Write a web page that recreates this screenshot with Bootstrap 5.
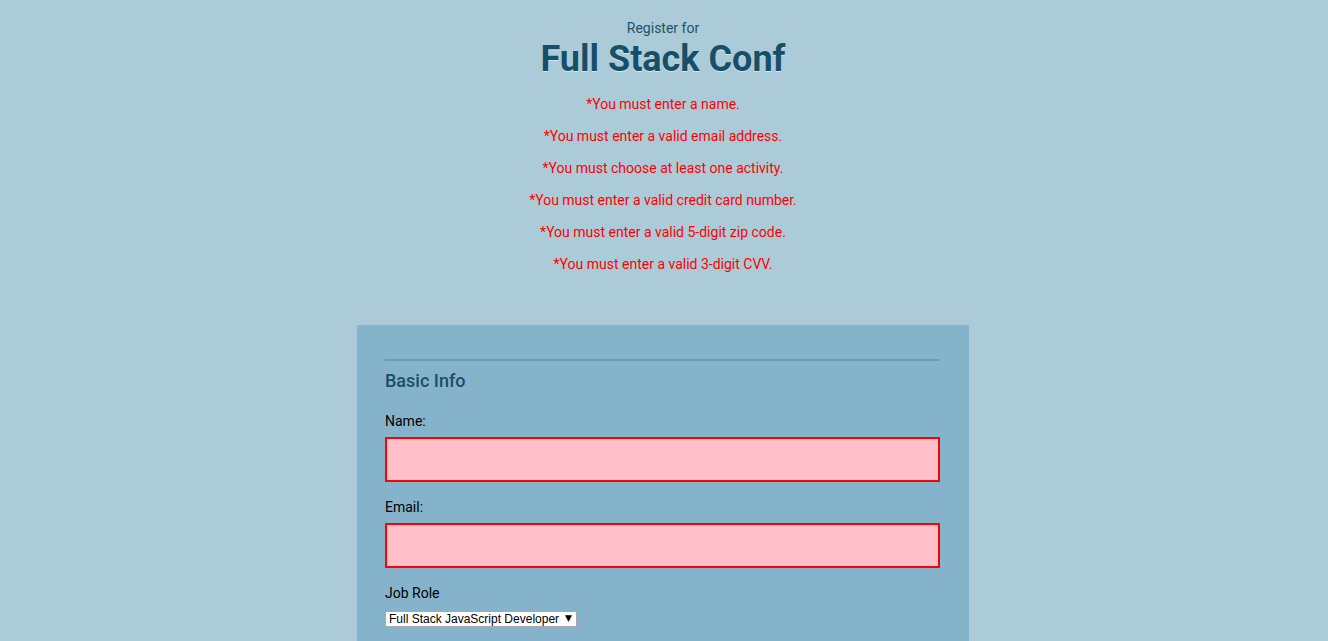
<!DOCTYPE html>
<html lang="en">
<head>
<meta charset="utf-8">
<meta name="viewport" content="width=device-width, initial-scale=1">
<title>Register for Full Stack Conf</title>
<link href="https://cdn.jsdelivr.net/npm/bootstrap@5.3.0/dist/css/bootstrap.min.css" rel="stylesheet">
<style>
  body { background: #accbd8; color: #000; font-family: Roboto, "Liberation Sans", sans-serif; font-size: 14px; line-height: 18px; }
  .page { padding-right: 2px; }
  .intro { color: #23546b; padding-top: 19px; }
  .intro h1 { color: #184f68; font-size: 36px; line-height: 44px; font-weight: 700; margin-bottom: 14px; text-shadow: 0 1px 0 #d3e6ee; }
  .errors { color: #f00; gap: 14px; }
  .panel { background: #85b3cb; max-width: 612px; margin-top: 52px; padding: 34px 29px 14px 28px; }
  .panel label { margin-bottom: 7px; }
  .section-title { border-top: 2px solid #689db4; color: #184f68; font-size: 18px; line-height: 24px; font-weight: 500; padding-top: 8px; margin-bottom: 19px; }
  .field-error, .field-error:focus { background: #ffc0cb; border: 2px solid #f00; height: 45px; }
  .role-wrap { width: fit-content; margin-top: 9px; }
  .role-select { appearance: none; width: 192px; height: 16px; background: #fff; border: 1px solid #a9a9a9; color: #000; font-family: "Liberation Sans", sans-serif; font-size: 12px; line-height: 14px; padding: 0 3px; }
  .role-wrap::after { content: "▼"; position: absolute; right: 5px; top: 0; font: 9px/15px "DejaVu Sans", sans-serif; pointer-events: none; }
</style>
</head>
<body>
<div class="page d-flex flex-column align-items-center min-vh-100">
  <header class="intro text-center">
    <div>Register for</div>
    <h1>Full Stack Conf</h1>
    <div class="errors d-flex flex-column" role="alert">
      <div>*You must enter a name.</div>
      <div>*You must enter a valid email address.</div>
      <div>*You must choose at least one activity.</div>
      <div>*You must enter a valid credit card number.</div>
      <div>*You must enter a valid 5-digit zip code.</div>
      <div>*You must enter a valid 3-digit CVV.</div>
    </div>
  </header>
  <form class="panel w-100 flex-grow-1">
    <fieldset>
      <legend class="section-title">Basic Info</legend>
      <div class="mb-3">
        <label class="d-block" for="name">Name:</label>
        <input class="form-control field-error rounded-0" type="text" id="name">
      </div>
      <div class="mb-3">
        <label class="d-block" for="email">Email:</label>
        <input class="form-control field-error rounded-0" type="email" id="email">
      </div>
      <label class="d-block" for="role">Job Role</label>
      <div class="role-wrap position-relative d-flex">
        <select class="role-select rounded-0" id="role">
          <option>Full Stack JavaScript Developer</option>
        </select>
      </div>
    </fieldset>
  </form>
</div>
<script src="https://cdn.jsdelivr.net/npm/bootstrap@5.3.0/dist/js/bootstrap.bundle.min.js"></script>
</body>
</html>
